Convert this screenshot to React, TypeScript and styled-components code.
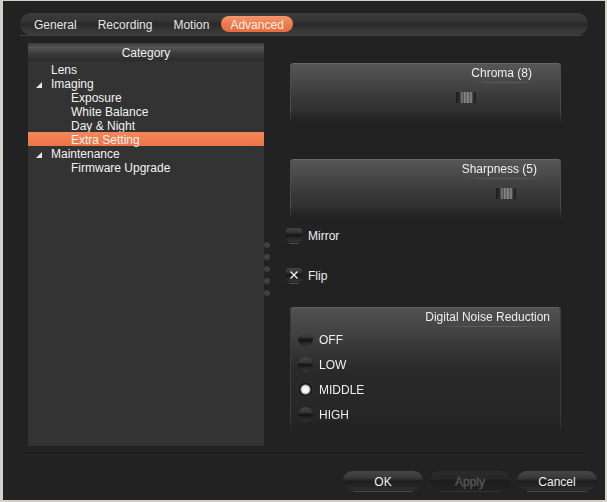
import React from "react";
import styled, { createGlobalStyle } from "styled-components";

const Global = createGlobalStyle`
  html, body { margin: 0; padding: 0; background: #d4d0c8; }
  body { font-family: "Liberation Sans", Arial, sans-serif; font-size: 12px; }
  * { box-sizing: border-box; }
`;

const Window = styled.div`
  margin: 1px 2px 2px 3px;
  width: 602px;
  height: 499px;
  background: #222222;
  color: #eeeeee;
  display: flex;
  flex-direction: column;
  padding-top: 12px;
`;

const TabBar = styled.div`
  margin-left: 17px;
  width: 568px;
  height: 22px;
  border-radius: 11px;
  background: linear-gradient(#3c3c3c 0%, #353535 35%, #282828 50%, #333333 70%, #3d3d3d 100%);
  display: flex;
  align-items: center;
  padding-left: 5px;
  gap: 3px;
`;

const Tab = styled.div<{ $active?: boolean }>`
  height: 16px;
  line-height: 18px;
  padding: 0 9px;
  border-radius: 8px;
  color: ${(p) => (p.$active ? "#fff1e8" : "#e6e6e6")};
  background: ${(p) =>
    p.$active ? "linear-gradient(#f7966e, #ee7a4c 50%, #e76c3f)" : "transparent"};
`;

const TabLine = styled.div`
  margin-left: 17px;
  width: 563px;
  height: 1px;
  background: #404040;
`;

const Main = styled.div`
  margin-top: 7px;
  margin-left: 25px;
  height: 403px;
  display: flex;
`;

const TreePanel = styled.div`
  width: 236px;
  background: #333333;
  display: flex;
  flex-direction: column;
`;

const CatHeader = styled.div`
  height: 18px;
  line-height: 20px;
  text-align: center;
  color: #eeeeee;
  background: linear-gradient(#3a3a3a 0%, #545454 25%, #3e3e3e 55%, #2a2a2a 100%);
`;

const TreeList = styled.div`
  padding-top: 1px;
  display: flex;
  flex-direction: column;
`;

const TreeRow = styled.div<{ $level: number; $selected?: boolean }>`
  height: 14px;
  line-height: 14px;
  padding-top: 1px;
  display: flex;
  align-items: flex-start;
  padding-left: ${(p) => 8 + p.$level * 20}px;
  color: #f2f2f2;
  background: ${(p) =>
    p.$selected ? "linear-gradient(#f4875a, #ec7446)" : "transparent"};
`;

const Expander = styled.span`
  width: 15px;
  height: 14px;
  display: flex;
  align-items: center;
  padding-top: 1px;
  flex-shrink: 0;
`;

const Splitter = styled.div`
  width: 26px;
  padding-top: 199px;
  display: flex;
  flex-direction: column;
  gap: 6px;
`;

const Dot = styled.div`
  width: 6px;
  height: 6px;
  border-radius: 50%;
  background: #404040;
`;

const RightCol = styled.div`
  width: 271px;
  display: flex;
  flex-direction: column;
`;

const Panel = styled.div<{ $h: number; $mt: number }>`
  position: relative;
  height: ${(p) => p.$h}px;
  margin-top: ${(p) => p.$mt}px;
  border-radius: 3px 3px 0 0;
  background: linear-gradient(#575757 0%, #484848 30%, #363636 65%, #2a2a2a 100%);
  box-shadow: inset 0 1px 0 #666666, inset 1px 0 0 #4c4c4c, inset -1px 0 0 #4c4c4c;
  -webkit-mask-image: linear-gradient(#000 80%, rgba(0, 0, 0, 0.2) 100%);
  mask-image: linear-gradient(#000 80%, rgba(0, 0, 0, 0.2) 100%);
`;

const TallPanel = styled(Panel)`
  background: linear-gradient(#525252 0%, #404040 22%, #2a2a2a 48%, #242424 100%);
  box-shadow: inset 0 1px 0 #5e5e5e, inset 1px 0 0 #3c3c3c, inset -1px 0 0 #3c3c3c;
  -webkit-mask-image: linear-gradient(#000 85%, rgba(0, 0, 0, 0) 100%);
  mask-image: linear-gradient(#000 85%, rgba(0, 0, 0, 0) 100%);
`;

const TitleRow = styled.div<{ $pr: number }>`
  padding-top: 3px;
  padding-right: ${(p) => p.$pr}px;
  text-align: right;
  line-height: 14px;
  height: 17px;
`;

const Title = styled.span`
  position: relative;
  display: inline-block;
  color: #eeeeee;
  &::after {
    content: "";
    position: absolute;
    left: 4px;
    right: -4px;
    bottom: -3px;
    height: 1px;
    background: linear-gradient(to right, transparent, #5c5c5c 30%, #5c5c5c 70%, transparent);
  }
`;

const Track = styled.div`
  position: relative;
  margin-top: 12px;
  height: 11px;
`;

const Thumb = styled.div`
  position: absolute;
  top: 0;
  width: 20px;
  height: 11px;
  background: linear-gradient(
    to right,
    #1c1c1c 0px,
    #303030 4px,
    #5a5a5a 5px,
    #8a8a8a 6px,
    #3e3e3e 7px,
    #9a9a9a 9px,
    #4a4a4a 10px,
    #a0a0a0 12px,
    #4a4a4a 13px,
    #8e8e8e 15px,
    #303030 17px,
    #202020 20px
  );
`;

const CheckRow = styled.label<{ $mt: number }>`
  margin-top: ${(p) => p.$mt}px;
  margin-left: -4px;
  height: 16px;
  display: flex;
  align-items: center;
  gap: 6px;
  color: #eeeeee;
  line-height: 18px;
`;

const CheckBox = styled.span`
  position: relative;
  width: 16px;
  height: 14px;
  margin-bottom: 2px;
  border-radius: 3px;
  background: linear-gradient(#424242 0%, #363636 30%, #151515 50%, #262626 70%, #333333 100%);
  display: flex;
  align-items: center;
  justify-content: center;
  &::after {
    content: "";
    position: absolute;
    left: 3px;
    right: 3px;
    bottom: -2px;
    height: 1px;
    background: #4e4e4e;
  }
`;

const RadioList = styled.div`
  margin-top: 3px;
  padding-left: 8px;
  display: flex;
  flex-direction: column;
`;

const RadioRow = styled.label`
  height: 25px;
  display: flex;
  align-items: center;
  gap: 6px;
  color: #eeeeee;
  line-height: 18px;
`;

const Radio = styled.span<{ $on?: boolean }>`
  width: 15px;
  height: 15px;
  margin-bottom: 1px;
  border-radius: 50%;
  background: ${(p) =>
    p.$on
      ? "radial-gradient(circle, #ffffff 0px, #eeeeee 3.5px, #9a9a9a 4.5px, #1e1e1e 5.5px, #141414 6.5px, #3a3a3a 7.5px)"
      : "linear-gradient(#454545 0%, #363636 35%, #131313 52%, #262626 72%, #363636 100%)"};
`;

const Separator = styled.div`
  margin-top: 7px;
  margin-left: 17px;
  width: 568px;
  height: 2px;
  border-top: 1px solid #171717;
  border-bottom: 1px solid #2b2b2b;
`;

const ButtonRow = styled.div`
  margin-top: 16px;
  display: flex;
  justify-content: flex-end;
  padding-right: 8px;
  gap: 7px;
`;

const Button = styled.button<{ $disabled?: boolean }>`
  position: relative;
  width: 80px;
  height: 19px;
  padding: 2px 0 0;
  border: none;
  border-radius: 10px;
  font-family: "Liberation Sans", Arial, sans-serif;
  font-size: 12px;
  color: ${(p) => (p.$disabled ? "#4e4e4e" : "#eeeeee")};
  text-shadow: ${(p) => (p.$disabled ? "0 0 1px #666" : "none")};
  background: ${(p) =>
    p.$disabled
      ? "linear-gradient(#2c2c2c 0%, #262626 40%, #1c1c1c 55%, #222222 100%)"
      : "linear-gradient(#474747 0%, #393939 35%, #1d1d1d 55%, #262626 80%, #2e2e2e 100%)"};
  &::after {
    content: "";
    position: absolute;
    left: 10px;
    right: 10px;
    bottom: -2px;
    height: 1px;
    background: ${(p) => (p.$disabled ? "#333" : "#474747")};
  }
`;

const Triangle = () => (
  <svg width="6" height="6" viewBox="0 0 6 6">
    <polygon points="6,0 6,6 0,6" fill="#e8e8e8" />
  </svg>
);

const XMark = () => (
  <svg width="10" height="10" viewBox="0 0 10 10">
    <path d="M1.5 1.5 L8.5 8.5 M8.5 1.5 L1.5 8.5" stroke="#f4f4f4" strokeWidth="1.3" />
  </svg>
);

type Node = { label: string; level: number; expand?: boolean; selected?: boolean };

const tree: Node[] = [
  { label: "Lens", level: 0 },
  { label: "Imaging", level: 0, expand: true },
  { label: "Exposure", level: 1 },
  { label: "White Balance", level: 1 },
  { label: "Day & Night", level: 1 },
  { label: "Extra Setting", level: 1, selected: true },
  { label: "Maintenance", level: 0, expand: true },
  { label: "Firmware Upgrade", level: 1 },
];

export default function App() {
  return (
    <>
      <Global />
      <Window>
        <TabBar>
          <Tab>General</Tab>
          <Tab>Recording</Tab>
          <Tab>Motion</Tab>
          <Tab $active>Advanced</Tab>
        </TabBar>
        <TabLine />
        <Main>
          <TreePanel>
            <CatHeader>Category</CatHeader>
            <TreeList>
              {tree.map((n) => (
                <TreeRow key={n.label} $level={n.level} $selected={n.selected}>
                  <Expander>{n.expand && <Triangle />}</Expander>
                  {n.label}
                </TreeRow>
              ))}
            </TreeList>
          </TreePanel>
          <Splitter>
            <Dot />
            <Dot />
            <Dot />
            <Dot />
            <Dot />
          </Splitter>
          <RightCol>
            <Panel $h={59} $mt={20}>
              <TitleRow $pr={29}>
                <Title>Chroma (8)</Title>
              </TitleRow>
              <Track>
                <Thumb style={{ left: 166 }} />
              </Track>
            </Panel>
            <Panel $h={59} $mt={37}>
              <TitleRow $pr={24}>
                <Title>Sharpness (5)</Title>
              </TitleRow>
              <Track>
                <Thumb style={{ left: 206 }} />
              </Track>
            </Panel>
            <CheckRow $mt={10}>
              <CheckBox />
              Mirror
            </CheckRow>
            <CheckRow $mt={24}>
              <CheckBox>
                <XMark />
              </CheckBox>
              Flip
            </CheckRow>
            <TallPanel $h={128} $mt={23}>
              <TitleRow $pr={11}>
                <Title>Digital Noise Reduction</Title>
              </TitleRow>
              <RadioList>
                <RadioRow>
                  <Radio />
                  OFF
                </RadioRow>
                <RadioRow>
                  <Radio />
                  LOW
                </RadioRow>
                <RadioRow>
                  <Radio $on />
                  MIDDLE
                </RadioRow>
                <RadioRow>
                  <Radio />
                  HIGH
                </RadioRow>
              </RadioList>
            </TallPanel>
          </RightCol>
        </Main>
        <Separator />
        <ButtonRow>
          <Button>OK</Button>
          <Button $disabled>Apply</Button>
          <Button>Cancel</Button>
        </ButtonRow>
      </Window>
    </>
  );
}
